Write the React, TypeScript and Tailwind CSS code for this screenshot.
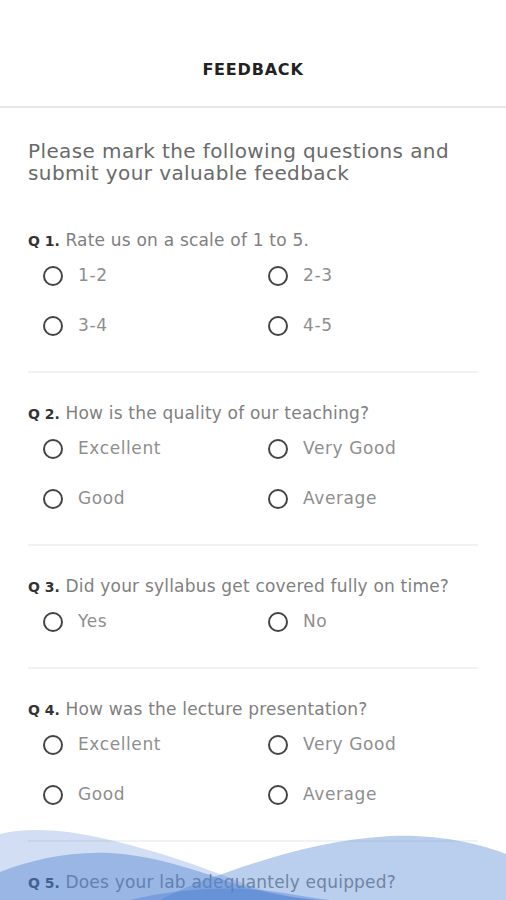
import { useState } from 'react';

interface Question {
  id: number;
  text: string;
  options: string[];
}

const questions: Question[] = [
  { id: 1, text: 'Rate us on a scale of 1 to 5.', options: ['1-2', '2-3', '3-4', '4-5'] },
  { id: 2, text: 'How is the quality of our teaching?', options: ['Excellent', 'Very Good', 'Good', 'Average'] },
  { id: 3, text: 'Did your syllabus get covered fully on time?', options: ['Yes', 'No'] },
  { id: 4, text: 'How was the lecture presentation?', options: ['Excellent', 'Very Good', 'Good', 'Average'] },
  { id: 5, text: 'Does your lab adequantely equipped?', options: ['Yes', 'No'] },
];

function Wave() {
  return (
    <svg className="absolute bottom-0 left-0 w-full h-[80px] pointer-events-none" viewBox="0 0 506 80" preserveAspectRatio="none">
      <path d="M0 14 C 25 8, 60 8, 110 20 C 160 32, 200 46, 240 62 C 270 74, 300 80, 330 80 L 0 80 Z" fill="#5b8ad4" fillOpacity="0.28" />
      <path d="M0 52 C 30 40, 70 31, 110 33 C 150 35, 190 48, 230 62 C 260 72, 290 78, 320 80 L 0 80 Z" fill="#4d7fd0" fillOpacity="0.42" />
      <path d="M200 62 C 260 40, 320 20, 390 16 C 440 14, 480 24, 506 34 L 506 80 L 160 80 C 175 72, 190 66, 200 62 Z" fill="#5b8ad4" fillOpacity="0.42" />
      <path d="M130 80 C 170 70, 220 66, 260 70 C 290 73, 310 78, 330 80 Z" fill="#3f74cc" fillOpacity="0.35" />
    </svg>
  );
}

export default function App() {
  const [answers, setAnswers] = useState<Record<number, string>>({});

  return (
    <div className="relative w-[506px] h-[900px] overflow-hidden bg-white" style={{ fontFamily: '"DejaVu Sans", sans-serif' }}>
      <div className="h-[108px] border-b-2 border-[#e6e6e6] flex items-center justify-center pt-[33px]">
        <h1 className="text-[16px] font-bold tracking-[0.8px] text-[#222]">FEEDBACK</h1>
      </div>

      <div className="px-[28px]">
        <p className="mt-[32px] text-[20px] leading-[22px] tracking-[0.4px] text-[#6a6a6a]">
          Please mark the following questions and submit your valuable feedback
        </p>

        {questions.map((q, i) => (
          <div key={q.id} className={i < questions.length - 1 ? 'border-b-2 border-[#f2f2f2] pb-[20px]' : ''}>
            <p className={`${i === 0 ? 'mt-[45px]' : 'mt-[29px]'} text-[17px] leading-[22px] tracking-[0.2px] text-[#808080] whitespace-nowrap`}>
              <span className="font-bold text-[#333] text-[14px] tracking-normal">Q {q.id}.</span> {q.text}
            </p>
            <div className="grid grid-cols-[225px_1fr] pl-[15px] -mt-[1px]">
              {q.options.map(opt => (
                <label key={opt} className="h-[50px] flex items-center gap-[15px] cursor-pointer" onClick={() => setAnswers({ ...answers, [q.id]: opt })}>
                  <span className="w-[20px] h-[20px] rounded-full border-2 border-[#444] flex items-center justify-center">
                    {answers[q.id] === opt && <span className="w-[10px] h-[10px] rounded-full bg-[#444]" />}
                  </span>
                  <span className="text-[17px] tracking-[0.6px] text-[#8e8e8e]">{opt}</span>
                </label>
              ))}
            </div>
          </div>
        ))}
      </div>

      <Wave />
    </div>
  );
}
